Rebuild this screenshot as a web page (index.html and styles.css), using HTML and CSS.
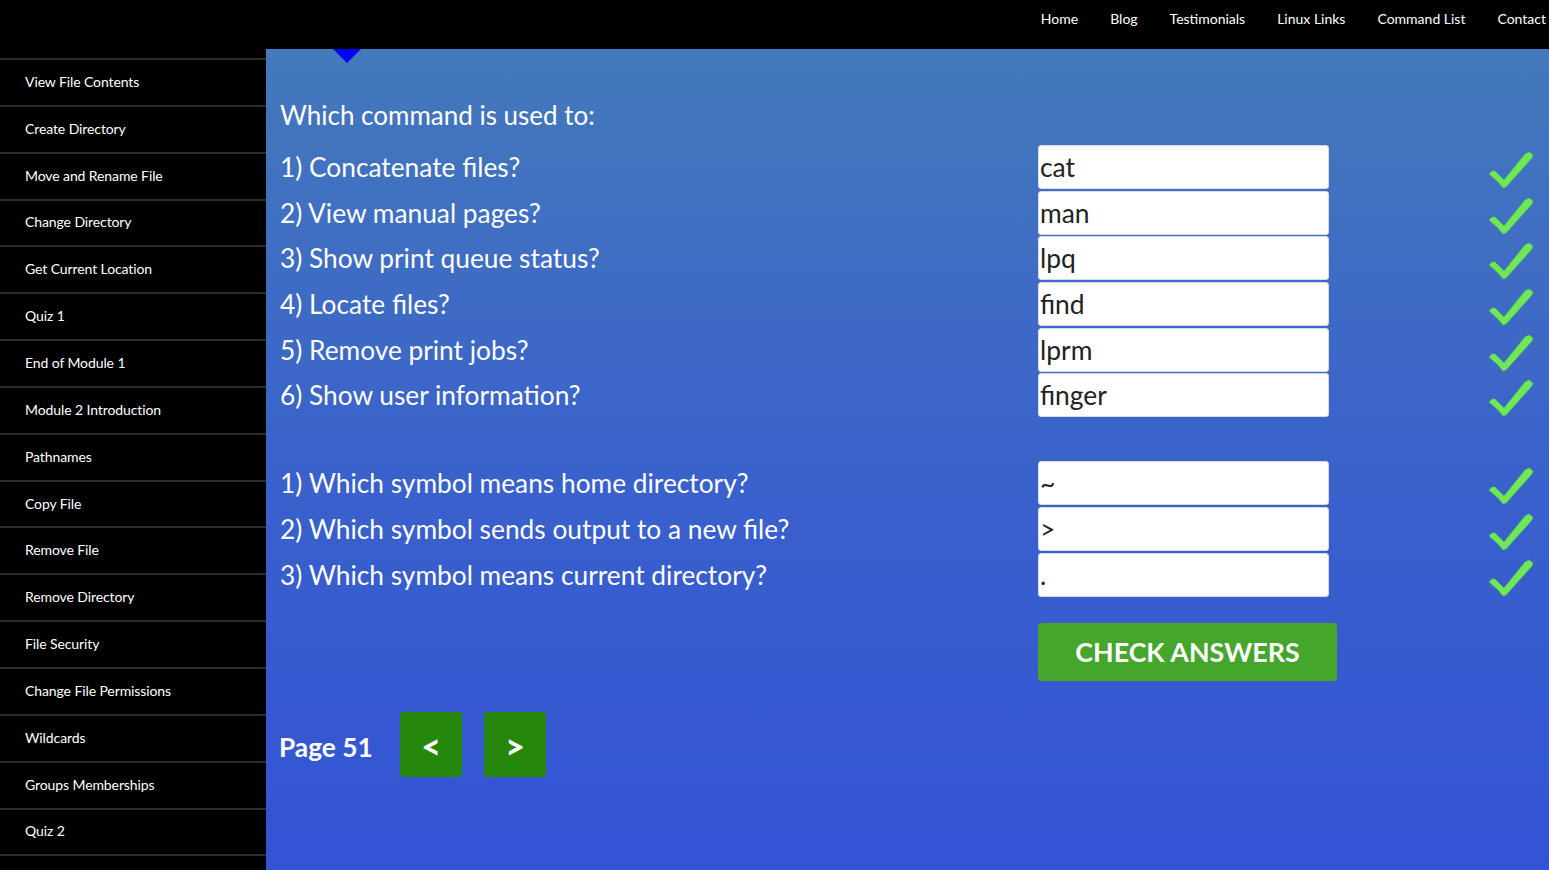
FILE: index.html
```html
<!DOCTYPE html>
<html lang="en">
<head>
<meta charset="utf-8">
<title>Linux Quiz - Page 51</title>
<link rel="stylesheet" href="styles.css">
</head>
<body>
<header class="topbar">
  <nav class="topnav">
    <a href="#">Home</a>
    <a href="#">Blog</a>
    <a href="#">Testimonials</a>
    <a href="#">Linux Links</a>
    <a href="#">Command List</a>
    <a href="#">Contact</a>
  </nav>
</header>
<div class="layout">
  <aside class="sidebar">
    <ul class="side-list">
      <li><a href="#">View File Contents</a></li>
      <li><a href="#">Create Directory</a></li>
      <li><a href="#">Move and Rename File</a></li>
      <li><a href="#">Change Directory</a></li>
      <li><a href="#">Get Current Location</a></li>
      <li><a href="#">Quiz 1</a></li>
      <li><a href="#">End of Module 1</a></li>
      <li><a href="#">Module 2 Introduction</a></li>
      <li><a href="#">Pathnames</a></li>
      <li><a href="#">Copy File</a></li>
      <li><a href="#">Remove File</a></li>
      <li><a href="#">Remove Directory</a></li>
      <li><a href="#">File Security</a></li>
      <li><a href="#">Change File Permissions</a></li>
      <li><a href="#">Wildcards</a></li>
      <li><a href="#">Groups Memberships</a></li>
      <li><a href="#">Quiz 2</a></li>
    </ul>
  </aside>
  <main class="main">
    <span class="pointer"></span>
    <h2 class="heading">Which command is used to:</h2>
    <div class="quiz">
      <div class="row"><span class="q">1) Concatenate files?</span><input class="ans" type="text" value="cat"><svg class="mark" viewBox="0 0 46 38"><polygon points="1,23 4,20 7,20 16,29 37,3 41,1 45,4 44,7 18,36 15,37 10,31"/></svg></div>
      <div class="row"><span class="q">2) View manual pages?</span><input class="ans" type="text" value="man"><svg class="mark" viewBox="0 0 46 38"><polygon points="1,23 4,20 7,20 16,29 37,3 41,1 45,4 44,7 18,36 15,37 10,31"/></svg></div>
      <div class="row"><span class="q">3) Show print queue status?</span><input class="ans" type="text" value="lpq"><svg class="mark" viewBox="0 0 46 38"><polygon points="1,23 4,20 7,20 16,29 37,3 41,1 45,4 44,7 18,36 15,37 10,31"/></svg></div>
      <div class="row"><span class="q">4) Locate files?</span><input class="ans" type="text" value="find"><svg class="mark" viewBox="0 0 46 38"><polygon points="1,23 4,20 7,20 16,29 37,3 41,1 45,4 44,7 18,36 15,37 10,31"/></svg></div>
      <div class="row"><span class="q">5) Remove print jobs?</span><input class="ans" type="text" value="lprm"><svg class="mark" viewBox="0 0 46 38"><polygon points="1,23 4,20 7,20 16,29 37,3 41,1 45,4 44,7 18,36 15,37 10,31"/></svg></div>
      <div class="row"><span class="q">6) Show user information?</span><input class="ans" type="text" value="finger"><svg class="mark" viewBox="0 0 46 38"><polygon points="1,23 4,20 7,20 16,29 37,3 41,1 45,4 44,7 18,36 15,37 10,31"/></svg></div>
    </div>
    <div class="quiz group2">
      <div class="row"><span class="q">1) Which symbol means home directory?</span><input class="ans" type="text" value="~"><svg class="mark" viewBox="0 0 46 38"><polygon points="1,23 4,20 7,20 16,29 37,3 41,1 45,4 44,7 18,36 15,37 10,31"/></svg></div>
      <div class="row"><span class="q">2) Which symbol sends output to a new file?</span><input class="ans" type="text" value="&gt;"><svg class="mark" viewBox="0 0 46 38"><polygon points="1,23 4,20 7,20 16,29 37,3 41,1 45,4 44,7 18,36 15,37 10,31"/></svg></div>
      <div class="row"><span class="q">3) Which symbol means current directory?</span><input class="ans" type="text" value="."><svg class="mark" viewBox="0 0 46 38"><polygon points="1,23 4,20 7,20 16,29 37,3 41,1 45,4 44,7 18,36 15,37 10,31"/></svg></div>
    </div>
    <div class="check-row">
      <button class="check-btn" type="button">CHECK ANSWERS</button>
    </div>
    <div class="pager">
      <span class="page-label">Page 51</span>
      <a class="page-btn" href="#">&lt;</a>
      <a class="page-btn" href="#">&gt;</a>
    </div>
  </main>
</div>
</body>
</html>
```

FILE: styles.css
```css
* { box-sizing: border-box; }

html, body {
  margin: 0;
  padding: 0;
  height: 100%;
}

body {
  background: #000;
  font-family: Lato, "Open Sans", "Liberation Sans", sans-serif;
  color: #fff;
  overflow: hidden;
}

a { color: #fff; text-decoration: none; }

.topbar {
  height: 49px;
  background: #000;
  display: flex;
  justify-content: flex-end;
}

.topnav {
  display: flex;
  align-items: center;
  gap: 32px;
  height: 37px;
  margin-right: 3px;
  font-size: 14px;
}

.layout {
  display: flex;
  height: calc(100% - 49px);
}

.sidebar {
  width: 266px;
  flex: none;
  background: #000;
}

.side-list {
  list-style: none;
  margin: 9px 0 0;
  padding: 0;
  border-top: 2px solid #2c2c2c;
}

.side-list li {
  height: 46.85px;
  border-bottom: 2px solid #2c2c2c;
  display: flex;
  align-items: center;
  padding-left: 25px;
  padding-bottom: 2px;
  font-size: 14px;
  letter-spacing: -0.1px;
}

.main {
  position: relative;
  flex: 1;
  background: linear-gradient(180deg, #4479bb 0%, #3a62cb 50%, #3253d5 100%);
  padding: 43px 0 0 14px;
}

.pointer {
  position: absolute;
  left: 67px;
  top: 0;
  width: 0;
  height: 0;
  border-left: 14px solid transparent;
  border-right: 14px solid transparent;
  border-top: 14px solid #0000ff;
}

.heading {
  margin: 0 0 7px;
  font-weight: 400;
  font-size: 26px;
  line-height: 46px;
}

.quiz {
  display: flex;
  flex-direction: column;
  gap: 1.7px;
}

.group2 { margin-top: 44px; }

.row {
  display: flex;
  align-items: center;
  height: 44px;
}

.q {
  width: 758px;
  flex: none;
  font-size: 26.3px;
}

.ans {
  width: 291px;
  height: 44px;
  flex: none;
  border: 1px solid #d6dbe6;
  border-radius: 3px;
  background: #fff;
  color: #222;
  font-family: Lato, "Open Sans", sans-serif;
  font-size: 26.4px;
  padding: 0 0 0 1px;
  outline: none;
}

.mark {
  width: 46px;
  height: 38px;
  margin-left: 159px;
  margin-top: 6px;
  flex: none;
  fill: #6fe858;
  stroke: #5cc447;
  stroke-width: 0.6;
  stroke-linejoin: round;
}

.check-row {
  margin: 26px 0 0 758px;
}

.check-btn {
  width: 299px;
  height: 58px;
  border: 0;
  border-radius: 3px;
  background: #44a62a;
  color: #fff;
  font-family: Lato, "Open Sans", sans-serif;
  font-weight: 700;
  font-size: 26.8px;
  padding: 0;
  cursor: pointer;
}

.pager {
  display: flex;
  align-items: center;
  margin-top: 31px;
}

.page-label {
  font-weight: 700;
  font-size: 26.3px;
  width: 121px;
  margin-left: -1px;
  padding-top: 6px;
}

.page-btn {
  width: 62px;
  height: 65px;
  flex: none;
  border-radius: 3px;
  background: #25880c;
  display: flex;
  align-items: center;
  justify-content: center;
  font-weight: 900;
  font-size: 34px;
  margin-right: 22px;
  padding-top: 2px;
}
```
